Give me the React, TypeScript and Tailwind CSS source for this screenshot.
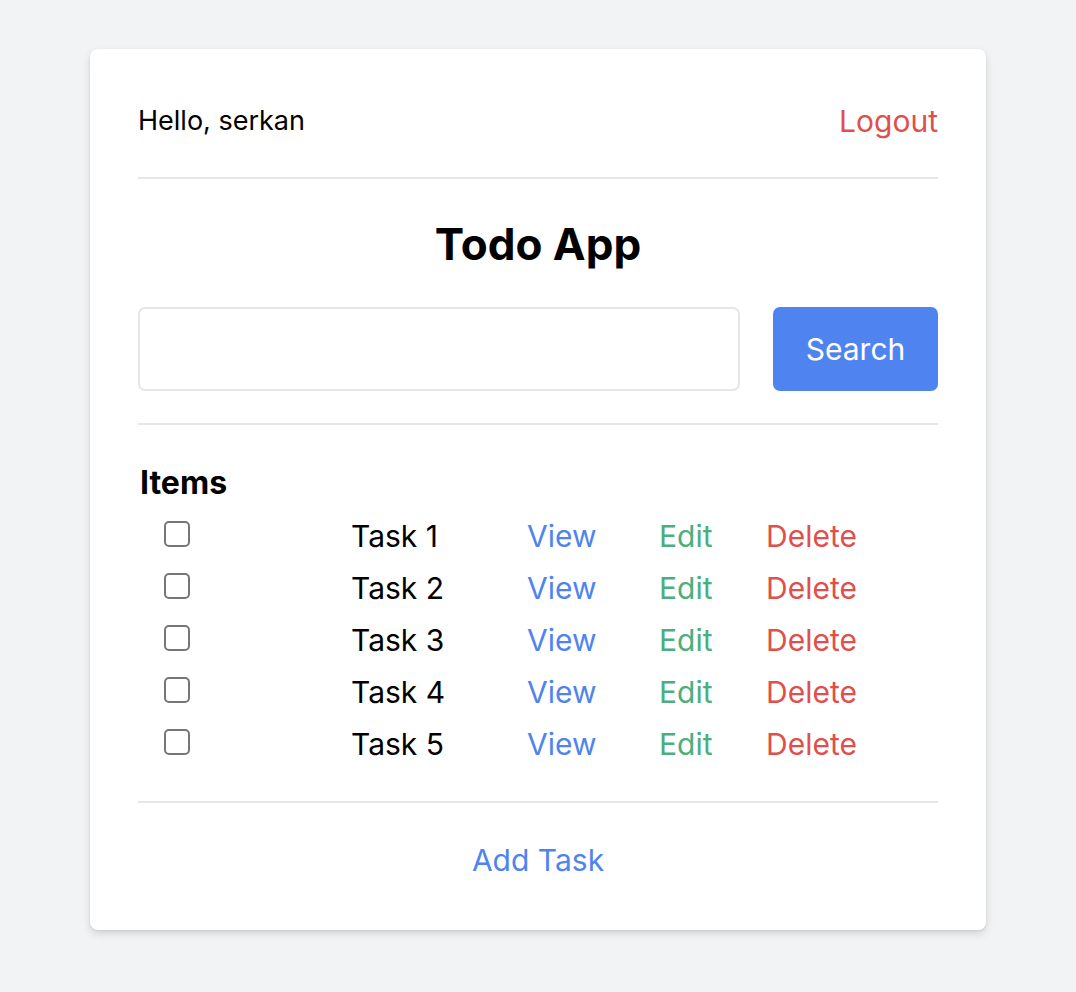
import React from "react";

const tasks = ["Task 1", "Task 2", "Task 3", "Task 4", "Task 5"];

export default function App() {
  return (
    <div
      className="min-h-[992px] w-full bg-[#f2f3f5] pt-[49px] pb-[62px]"
      style={{ fontFamily: "Inter, 'Noto Sans', sans-serif" }}
    >
      <div className="mx-[90px] w-[896px] rounded-[8px] bg-white px-[48px] pt-[48px] pb-[52px] shadow-[0_4px_8px_rgba(0,0,0,0.12),0_1px_3px_rgba(0,0,0,0.08)]">
        <div className="flex h-[48px] items-center justify-between">
          <span className="text-[27px] text-black">Hello, serkan</span>
          <button className="text-[30px] text-[#e04f4b]">Logout</button>
        </div>
        <div className="mt-[32px] h-[2px] bg-[#e5e6ea]" />
        <h1 className="mt-[41px] flex h-[48px] items-center justify-center text-[44px] font-bold text-black">
          Todo App
        </h1>
        <div className="mt-[39px] flex h-[84px] gap-[33px]">
          <input
            className="h-full flex-1 rounded-[7px] border-2 border-[#e5e6ea] px-3 text-[28px] outline-none"
            type="text"
          />
          <button className="h-full w-[165px] rounded-[7px] bg-[#4f84f0] text-[30px] text-white">
            Search
          </button>
        </div>
        <div className="mt-[32px] h-[2px] bg-[#e5e6ea]" />
        <h2 className="mt-[40px] flex h-[36px] items-center pl-[2px] text-[32px] font-bold text-black">
          Items
        </h2>
        <div className="mt-[9px] flex flex-col">
          {tasks.map((t) => (
            <div
              key={t}
              className="grid h-[52px] grid-cols-[213px_176px_132px_107px_1fr] items-center text-[30px]"
            >
              <div className="pl-[26px]">
                <span className="mb-[4px] block h-[26px] w-[26px] rounded-[5px] border-2 border-[#767676] bg-white" />
              </div>
              <span className="text-black">{t}</span>
              <span className="text-[#4f84f0]">View</span>
              <span className="text-[#4cae7c]">Edit</span>
              <span className="text-[#e04f4b]">Delete</span>
            </div>
          ))}
        </div>
        <div className="mt-[31px] h-[2px] bg-[#e5e6ea]" />
        <div className="mt-[39px] flex h-[36px] items-center justify-center">
          <button className="text-[30px] text-[#4f84f0]">Add Task</button>
        </div>
      </div>
    </div>
  );
}
